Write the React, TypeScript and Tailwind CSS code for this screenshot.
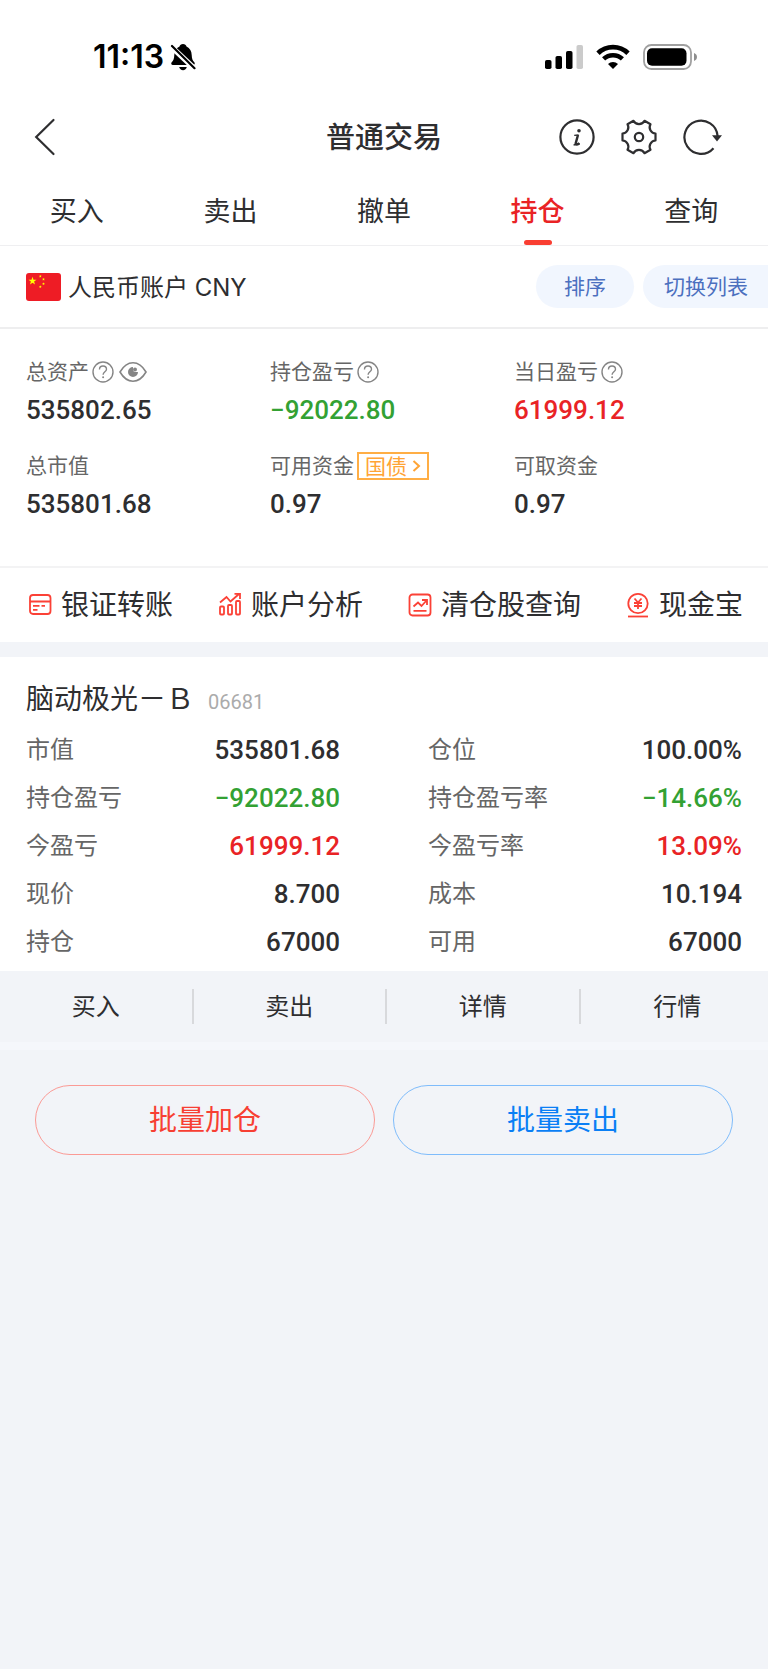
import type { ReactNode } from 'react';

const numFont = "font-[Roboto,'Noto_Sans_CJK_SC',sans-serif] font-medium";

const tones = {
  dark: 'text-[#2e2e30]',
  up: 'text-[#e92325]',
  down: 'text-[#33a133]',
};
type Tone = keyof typeof tones;

function BellOff() {
  return (
    <svg width="26" height="28" viewBox="0 0 26 28" aria-hidden="true">
      <path
        d="M13 1c1.900 0 3.100 1 3.500 2.400C20 5 21.600 8 21.700 12c.1 4 1 5.500 2.600 7.200.9 1 .5 2.800-1.200 2.800H2.900c-1.700 0-2.100-1.800-1.200-2.800C3.300 17.500 4.200 16 4.300 12c.1-4 1.700-7 5.200-8.600C9.900 2 11.100 1 13 1z"
        fill="#000"
      />
      <path d="M9.200 24h7.600c-.4 1.900-1.900 3.200-3.800 3.200S9.600 25.900 9.200 24z" fill="#000" />
      <path d="M1 3.500 25 26" stroke="#fff" strokeWidth="5.500" />
      <path d="M2 3 24.500 25.200" stroke="#000" strokeWidth="2.200" strokeLinecap="round" />
    </svg>
  );
}

function Signal() {
  return (
    <svg width="38" height="26" viewBox="0 0 38 26" aria-hidden="true">
      <rect x="0" y="16" width="6.500" height="9" rx="1.800" />
      <rect x="10.500" y="12" width="6.500" height="13" rx="1.800" />
      <rect x="21" y="7" width="6.500" height="18" rx="1.800" />
      <rect x="31.500" y="1" width="6.500" height="24" rx="1.800" fill="#cbcbcb" />
    </svg>
  );
}

function Wifi() {
  return (
    <svg width="34" height="26" viewBox="0 0 34 26" aria-hidden="true">
      <path d="M2 9.300a21.500 21.500 0 0 1 30 0" fill="none" stroke="#000" strokeWidth="4.800" />
      <path d="M7.600 14.900a13.600 13.600 0 0 1 18.800 0" fill="none" stroke="#000" strokeWidth="4.500" />
      <path d="M17 25l-5-5a7.200 7.200 0 0 1 10 0z" />
    </svg>
  );
}

function Battery() {
  return (
    <svg width="54" height="26" viewBox="0 0 54 26" aria-hidden="true">
      <rect x="1" y="1" width="47" height="24" rx="7.500" fill="none" stroke="#a0a0a0" strokeWidth="1.800" />
      <rect x="4" y="4.200" width="39.500" height="17.600" rx="5" />
      <path d="M51 9c1.800.7 3 2.200 3 4s-1.200 3.300-3 4z" fill="#8e8e8e" />
    </svg>
  );
}

function Gear() {
  return (
    <svg width="38" height="38" viewBox="-19 -19 38 38" fill="none" stroke="#2e2e30" strokeWidth="2.200" strokeLinejoin="round" aria-hidden="true">
      <path d="M16.500-3.500v7A6.200 6.200 0 0 0 11.500 12.800L5.500 16.200A6.200 6.200 0 0 0-5.500 16.200L-11.500 12.800A6.200 6.200 0 0 0-16.500 3.500v-7A6.200 6.200 0 0 0-11.500-12.800L-5.500-16.200A6.200 6.200 0 0 0 5.500-16.200L11.500-12.800A6.200 6.200 0 0 0 16.500-3.500z" />
      <circle r="4.200" />
    </svg>
  );
}

function Refresh() {
  return (
    <svg width="40" height="38" viewBox="-19 -19 40 38" fill="none" stroke="#2e2e30" strokeWidth="2.200" aria-hidden="true">
      <path d="M12.500 11.200A16.600 16.600 0 1 1 16.600-1" />
      <path d="M11-1.800h10L16 4.500z" fill="#2e2e30" stroke="none" />
    </svg>
  );
}

function Info() {
  return (
    <svg width="38" height="38" viewBox="-19 -19 38 38" fill="none" stroke="#2e2e30" aria-hidden="true">
      <circle r="16.600" strokeWidth="2.200" />
      <circle cx="2" cy="-6.300" r="1.800" fill="#2e2e30" stroke="none" />
      <path d="M-2.800-1.600 1.600-2" strokeWidth="1.400" />
      <path d="M1-2-1.200 5.800c-.5 1.900.6 2.300 3.600.6" strokeWidth="2.400" />
      <path d="M-3.400 8 2.800 6.600" strokeWidth="1.400" />
    </svg>
  );
}

function Help({ label }: { label: string }) {
  return (
    <button type="button" aria-label={label}>
      <svg width="22" height="22" viewBox="0 0 22 22" fill="none" stroke="#858585" strokeWidth="1.400" aria-hidden="true">
        <circle cx="11" cy="11" r="10" />
        <path d="M7.500 8.500C7.500 6.300 9 5 11 5s3.500 1.200 3.500 3.200c0 2.500-3.400 2.800-3.400 5.600" />
        <circle cx="11.100" cy="16.300" r="1" fill="#858585" stroke="none" />
      </svg>
    </button>
  );
}

function Eye() {
  return (
    <svg width="28" height="22" viewBox="0 0 28 22" fill="none" stroke="#858585" strokeWidth="1.600" aria-hidden="true">
      <path d="M1 11C4.500 5 8.800 1.800 14 1.800S23.500 5 27 11c-3.500 6-7.800 9.200-13 9.200S4.500 17 1 11z" />
      <path d="M14 6a5 5 0 1 0 5 5h-3a2.500 2.500 0 0 1-2-2.500z" fill="#858585" stroke="none" />
      <circle cx="16" cy="8.500" r="2" fill="#858585" stroke="none" />
    </svg>
  );
}

function Flag() {
  const star = 'M0-4.200 1-1.300H4L1.600.5 2.500 3.400 0 1.700-2.500 3.400-1.600.5-4-1.300H-1z';
  return (
    <svg width="35" height="28" viewBox="0 0 35 28" className="shrink-0" aria-hidden="true">
      <rect width="35" height="28" rx="3" fill="#ee1c25" />
      <g fill="#ffff00">
        <path d={star} transform="translate(6.500 8)" />
        <path d={star} transform="translate(14.300 3.300) scale(.36)" />
        <path d={star} transform="translate(17.500 6.300) scale(.36)" />
        <path d={star} transform="translate(17.500 10.800) scale(.36)" />
        <path d={star} transform="translate(14.300 13.800) scale(.36)" />
      </g>
    </svg>
  );
}

function QuickIcon({ children }: { children: ReactNode }) {
  return (
    <svg width="24" height="26" viewBox="0 0 24 26" fill="none" stroke="#fb4136" strokeWidth="1.800" className="shrink-0" aria-hidden="true">
      {children}
    </svg>
  );
}

const quickLinks = [
  {
    label: '银证转账',
    icon: (
      <QuickIcon>
        <rect x="2" y="3" width="20.500" height="19" rx="3" />
        <path d="M2 9.500h20.500M5 13.800h6.500M13.500 13.800h3.500M5 17.800h4.500" />
      </QuickIcon>
    ),
  },
  {
    label: '账户分析',
    icon: (
      <QuickIcon>
        <rect x="2" y="14.500" width="4" height="8" rx="1" />
        <rect x="10" y="13" width="4" height="9.500" rx="1" />
        <rect x="18" y="9" width="4" height="13.500" rx="1" />
        <path d="M2 10.500 8.500 5l4 4.500L21 2M16.500 1.800H22V7" />
      </QuickIcon>
    ),
  },
  {
    label: '清仓股查询',
    icon: (
      <QuickIcon>
        <rect x="1.500" y="2.500" width="21" height="21" rx="3" />
        <path d="M5.500 14.500 10 10.500l3.500 3.500 5-5.500M14 8h5v5M5.500 18.800h13" />
      </QuickIcon>
    ),
  },
  {
    label: '现金宝',
    icon: (
      <QuickIcon>
        <circle cx="12" cy="11.500" r="9.700" />
        <path d="M8.500 6.500 12 10.500l3.500-4M8 11h8M8 14h8M12 10.500v6.500" />
        <path d="M2 24.500h20" />
      </QuickIcon>
    ),
  },
];

const tabs = ['买入', '卖出', '撤单', '持仓', '查询'];

const holdings: { label: string; value: string; tone: Tone }[] = [
  { label: '市值', value: '535801.68', tone: 'dark' },
  { label: '仓位', value: '100.00%', tone: 'dark' },
  { label: '持仓盈亏', value: '−92022.80', tone: 'down' },
  { label: '持仓盈亏率', value: '−14.66%', tone: 'down' },
  { label: '今盈亏', value: '61999.12', tone: 'up' },
  { label: '今盈亏率', value: '13.09%', tone: 'up' },
  { label: '现价', value: '8.700', tone: 'dark' },
  { label: '成本', value: '10.194', tone: 'dark' },
  { label: '持仓', value: '67000', tone: 'dark' },
  { label: '可用', value: '67000', tone: 'dark' },
];

function Asset({ label, value, tone = 'dark', children }: { label: string; value: string; tone?: Tone; children?: ReactNode }) {
  return (
    <div>
      <dt className="flex h-9 items-center gap-[3px] text-[21px] text-[#666]">
        {label}
        {children}
      </dt>
      <dd className={`h-10 text-[26px] leading-10 ${numFont} ${tones[tone]}`}>{value}</dd>
    </div>
  );
}

export default function App() {
  return (
    <div className="min-h-screen overflow-x-hidden bg-[#f2f4f8] font-[Inter,'Noto_Sans_CJK_SC',sans-serif] text-[#2e2e30]">
      <div className="bg-white">
        <div className="flex h-[92px] items-center justify-between pt-[22px] pr-[71px] pl-[93px] text-black">
          <div className="flex items-center gap-1.5">
            <span className="text-[32px] font-semibold">11:13</span>
            <BellOff />
          </div>
          <div className="flex items-center gap-[13px]">
            <Signal />
            <Wifi />
            <Battery />
          </div>
        </div>

        <header className="grid h-[90px] grid-cols-[1fr_auto_1fr] items-center pr-[46px] pl-[34px]">
          <button type="button" aria-label="返回" className="justify-self-start">
            <svg width="22" height="38" viewBox="0 0 22 38" fill="none" stroke="#2e2e30" strokeWidth="2.200" strokeLinecap="round" aria-hidden="true">
              <path d="M19.500 2 2.200 19 19.500 36" />
            </svg>
          </button>
          <h1 className="pt-0.5 pl-3 text-[29px] font-medium">普通交易</h1>
          <div className="flex items-center gap-6 justify-self-end">
            <button type="button" aria-label="信息"><Info /></button>
            <button type="button" aria-label="设置"><Gear /></button>
            <button type="button" aria-label="刷新"><Refresh /></button>
          </div>
        </header>

        <nav className="grid grid-cols-5 border-b border-[#efeff1]">
          {tabs.map((tab) => {
            const active = tab === '持仓';
            return (
              <a
                key={tab}
                href="#"
                aria-current={active ? 'page' : undefined}
                className={`relative flex h-[63px] items-center justify-center pb-0.5 text-[27px] ${active ? 'font-medium text-[#e92325]' : ''}`}
              >
                {tab}
                {active && <span className="absolute bottom-0 h-[5px] w-7 rounded-full bg-[#f93e32]" />}
              </a>
            );
          })}
        </nav>

        <div className="flex h-[83px] items-center border-b-2 border-[#eeeeef] pl-[26px]">
          <Flag />
          <h2 className="pt-0.5 pl-[7px] text-[24px]">人民币账户 CNY</h2>
          <div className="ml-auto flex gap-[9px] text-[21px] text-[#4c70bf]">
            <button type="button" className="h-[43px] rounded-full bg-[#f1f6fe] px-7 pt-px">排序</button>
            <button type="button" className="h-[43px] rounded-l-full bg-[#f1f6fe] pt-px pr-5 pl-[21px]">切换列表</button>
          </div>
        </div>

        <dl className="grid grid-cols-3 gap-y-[18px] border-b-2 border-[#f3f3f4] pt-[25px] pr-[10px] pb-[42px] pl-[26px]">
          <Asset label="总资产" value="535802.65">
            <Help label="总资产说明" />
            <button type="button" aria-label="隐藏金额" className="pl-0.5"><Eye /></button>
          </Asset>
          <Asset label="持仓盈亏" value="−92022.80" tone="down">
            <Help label="持仓盈亏说明" />
          </Asset>
          <Asset label="当日盈亏" value="61999.12" tone="up">
            <Help label="当日盈亏说明" />
          </Asset>
          <Asset label="总市值" value="535801.68" />
          <Asset label="可用资金" value="0.97">
            <button type="button" className="flex h-7 items-center gap-[5px] border-2 border-[#ffae45] px-1.5 text-[21px] leading-none text-[#ffa435]">
              国债
              <svg width="9" height="14" viewBox="0 0 9 14" fill="none" stroke="#ffa435" strokeWidth="2" aria-hidden="true">
                <path d="M1.500 2 7 7l-5.500 5" />
              </svg>
            </button>
          </Asset>
          <Asset label="可取资金" value="0.97" />
        </dl>

        <nav className="flex h-[74px] items-center justify-between pr-[25px] pl-[28px] text-[28px]">
          {quickLinks.map(({ label, icon }) => (
            <a key={label} href="#" className="flex items-center gap-[9px]">
              {icon}
              {label}
            </a>
          ))}
        </nav>
      </div>

      <section className="mt-[15px] bg-white px-[26px] pt-6 pb-[5px]">
        <h3 className="mb-[9px] flex h-9 items-baseline gap-3.5 text-[28px] leading-9">
          脑动极光－Ｂ
          <span className="font-[Roboto,sans-serif] text-[20px] font-normal text-[#ababab]">06681</span>
        </h3>
        <dl className="grid grid-cols-2 gap-x-[88px]">
          {holdings.map(({ label, value, tone }) => (
            <div key={label} className="flex h-12 items-center justify-between">
              <dt className="text-[24px] text-[#666]">{label}</dt>
              <dd className={`text-[26px] ${numFont} ${tones[tone]}`}>{value}</dd>
            </div>
          ))}
        </dl>
      </section>

      <div className="border-b-8 border-[#f5f7fb]">
        <div className="-mr-1.5 grid grid-cols-4">
          {['买入', '卖出', '详情', '行情'].map((action, i) => (
            <div key={action} className="flex h-[71px] items-center">
              <button type="button" className="h-full flex-1 pt-px text-[24px]">{action}</button>
              {i < 3 && <span className="h-[35px] w-0.5 bg-[#d8d9dc]" />}
            </div>
          ))}
        </div>
      </div>

      <div className="grid grid-cols-2 gap-[18px] px-[35px] pt-[35px] text-[28px]">
        <button type="button" className="h-[70px] rounded-full border border-[#fb9a95] text-[#f73f33]">批量加仓</button>
        <button type="button" className="h-[70px] rounded-full border border-[#7fbcfb] text-[#0a7ff5]">批量卖出</button>
      </div>
    </div>
  );
}
